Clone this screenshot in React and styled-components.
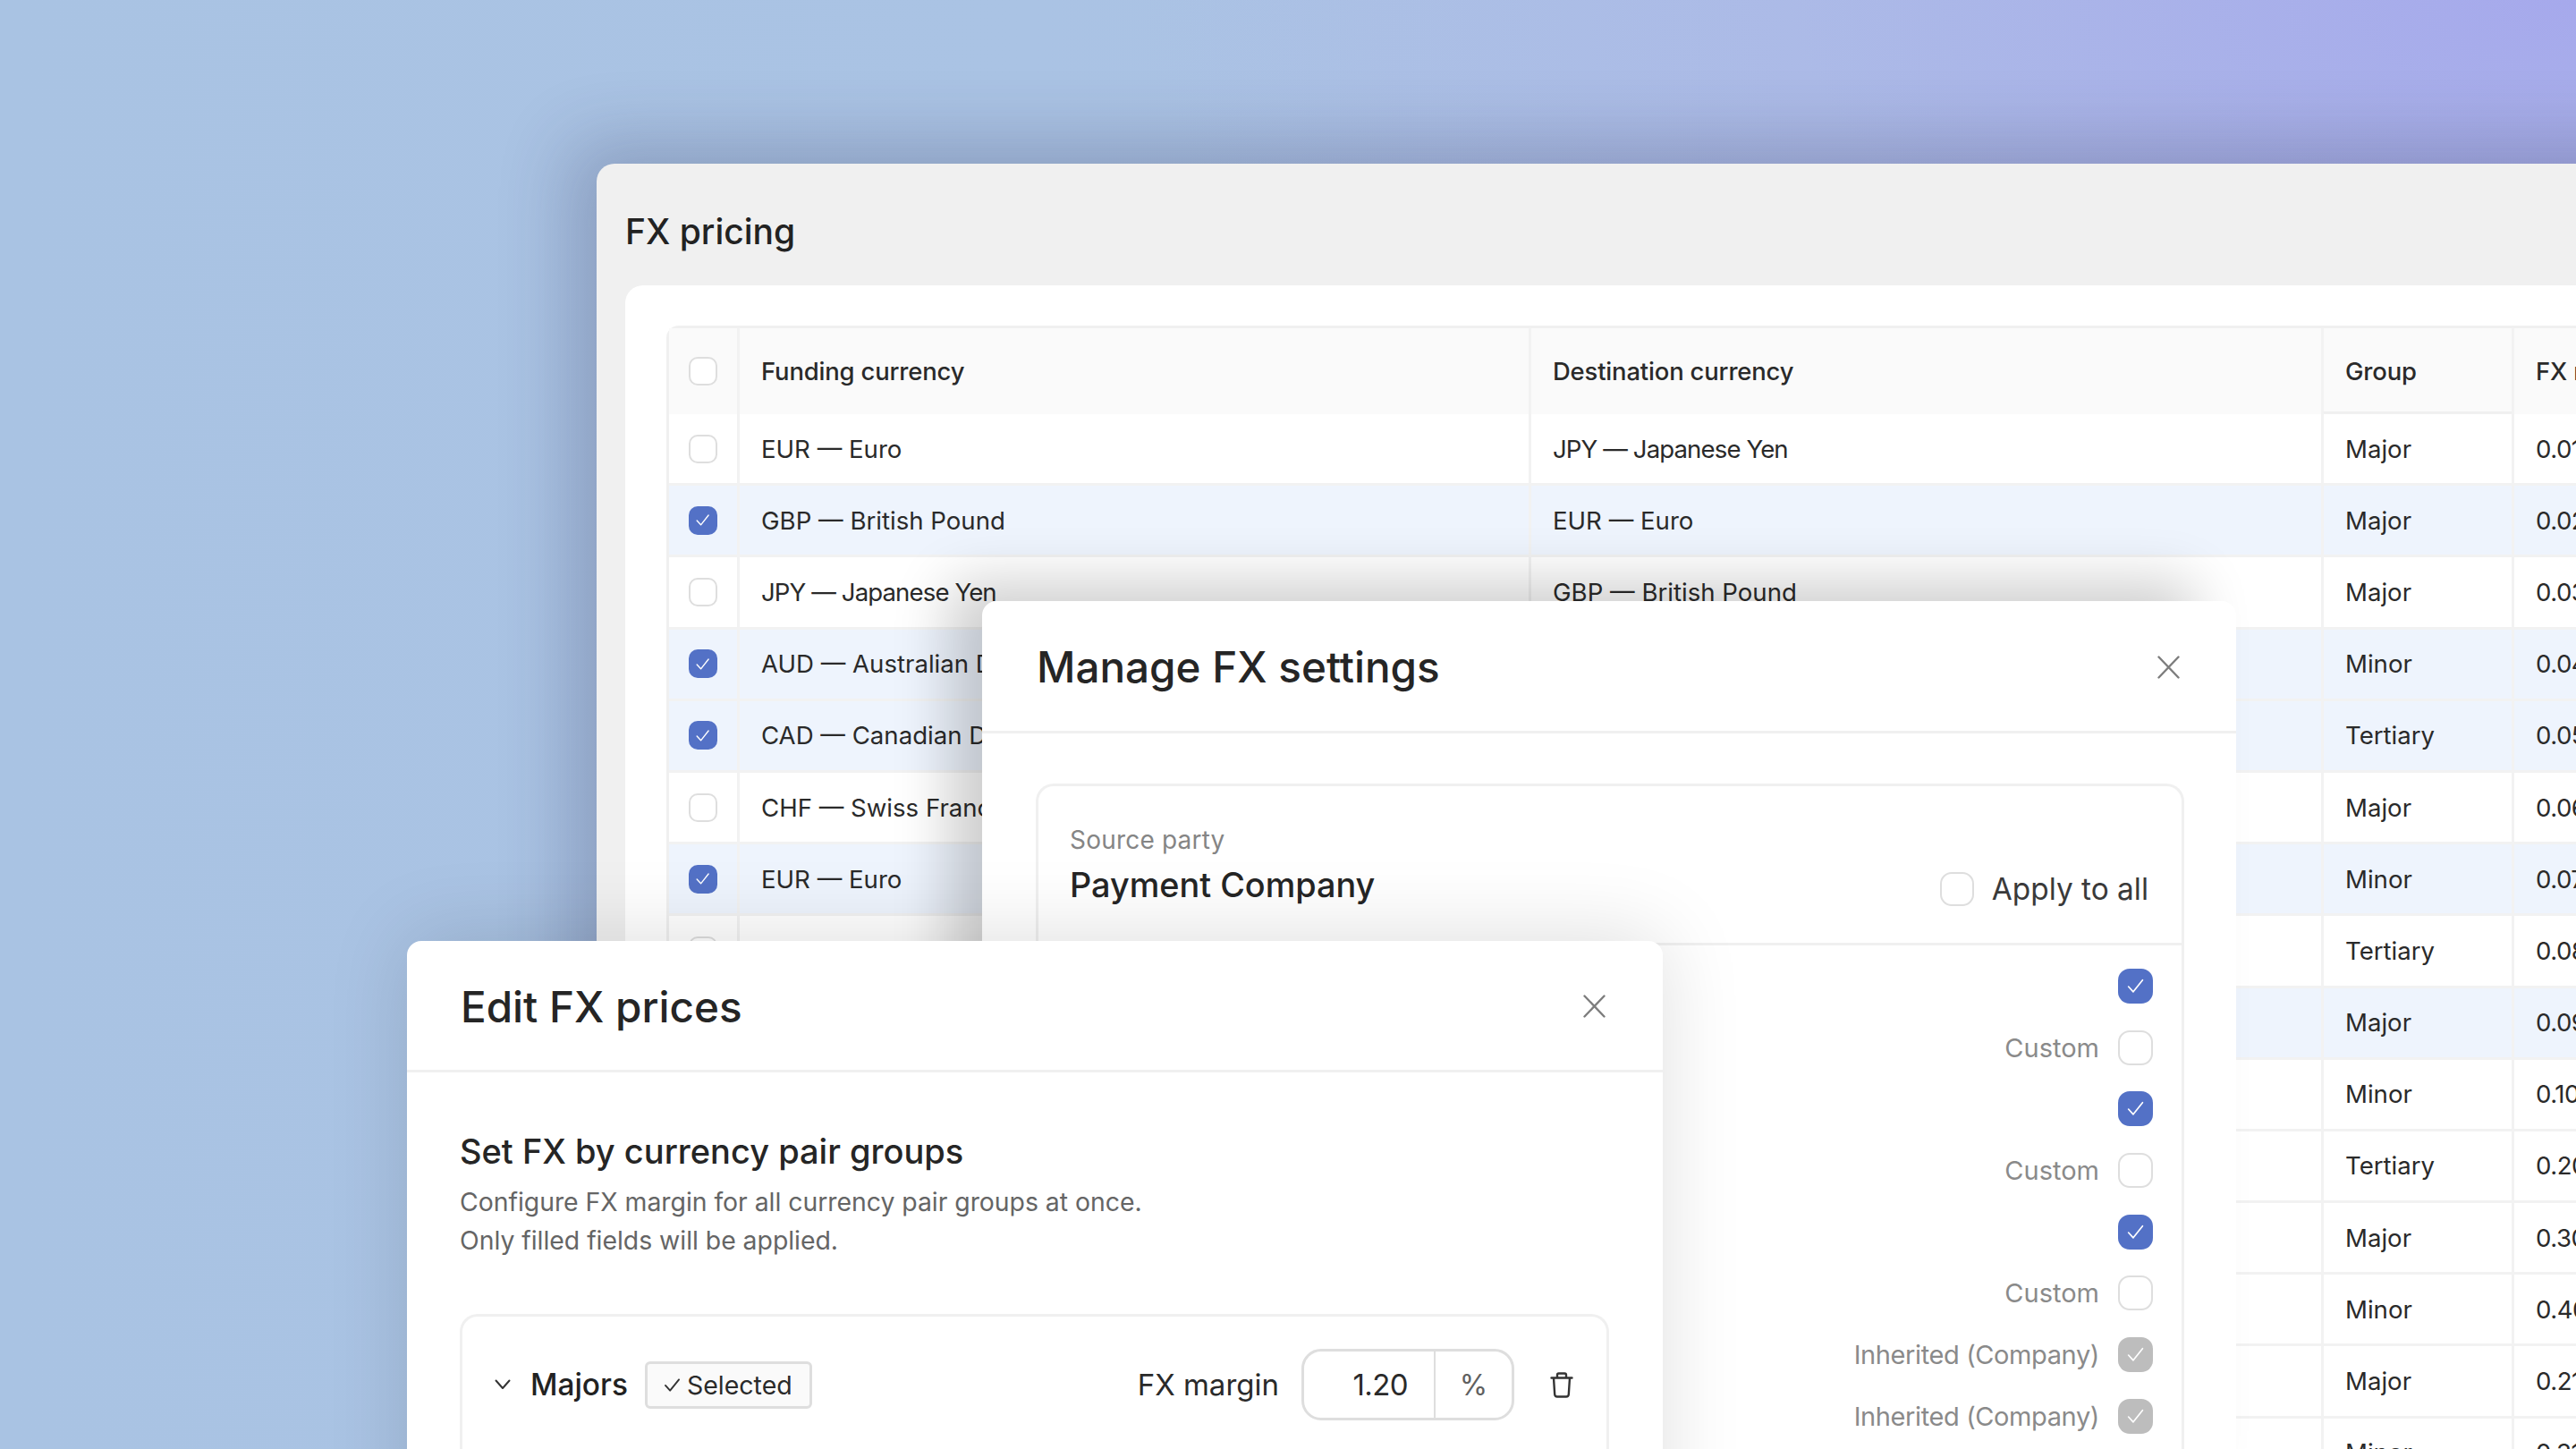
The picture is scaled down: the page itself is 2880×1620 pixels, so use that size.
import React from 'react';
import styled, { createGlobalStyle } from 'styled-components';

const Global = createGlobalStyle`
  html, body { margin: 0; padding: 0; width: 2880px; height: 1620px; overflow: hidden; }
  #root { width: 2880px; height: 1620px; }
  * { box-sizing: border-box; }
`;

const Stage = styled.div`
  position: relative;
  width: 2880px;
  height: 1620px;
  overflow: hidden;
  font-family: Inter, "Liberation Sans", sans-serif;
  color: #222;
  background:
    radial-gradient(1600px 760px at 100% 0%, #a6a9ec 0%, rgba(172, 184, 232, 0.75) 55%, rgba(172, 190, 228, 0) 100%),
    linear-gradient(90deg, #a9c3e3 0%, #aac3e4 40%, #aec0e4 100%);
`;

const BackPanel = styled.section`
  position: absolute;
  left: 667px;
  top: 183px;
  width: 2500px;
  height: 1700px;
  background: #f0f0f0;
  border-radius: 20px 0 0 0;
  box-shadow: -30px -24px 80px rgba(40, 40, 80, 0.24);
  padding: 0 0 0 32px;
`;

const PanelTitle = styled.h1`
  margin: 0;
  height: 136px;
  display: flex;
  align-items: center;
  padding-top: 14px;
  font-size: 39px;
  font-weight: 500;
  color: #222;
`;

const TableCard = styled.div`
  background: #fff;
  border-radius: 20px 0 0 0;
  padding: 45px 0 0 46px;
  height: 1500px;
`;

const Table = styled.div`
  border: solid #f0f0f0;
  border-width: 3px 0 0 3px;
  border-radius: 14px 0 0 0;
  width: 2400px;
`;

const Row = styled.div`
  display: grid;
  grid-template-columns: 79px 885px 886px 213px 1fr;
  height: ${p => (p.$head ? 96 : 80.2)}px;
  background: ${p => (p.$head ? '#fafafa' : p.$on ? '#eef4fd' : '#fff')};
  border-bottom: ${p => (p.$head ? 0 : 3)}px solid #f2f2f2;
  font-size: ${p => (p.$head ? 27.4 : 27.6)}px;
  font-weight: ${p => (p.$head ? 500 : 400)};
  letter-spacing: ${p => (p.$head ? '-0.15px' : '0')};
  color: #2a2a2a;
`;

const Cell = styled.div`
  display: flex;
  align-items: center;
  justify-content: ${p => (p.$center ? 'center' : 'flex-start')};
  padding-left: ${p => (p.$center ? 0 : 24)}px;
  border-right: 3px solid #f2f2f2;
  white-space: nowrap;
  overflow: hidden;
  letter-spacing: ${p => (p.$tight ? `${p.$tight}px` : 'inherit')};
  box-shadow: ${p => (p.$under ? 'inset 0 -3px 0 #f0f0f0' : 'none')};
`;

const Box = styled.span`
  flex: none;
  width: ${p => p.$size || 32}px;
  height: ${p => p.$size || 32}px;
  border-radius: ${p => (p.$size ? 13 : 10)}px;
  display: inline-flex;
  align-items: center;
  justify-content: center;
  background: ${p => (p.$kind === 'on' ? '#5371c6' : p.$kind === 'inherit' ? '#bdbdbd' : '#fff')};
  border: ${p => (p.$kind ? 'none' : '2.5px solid #dedede')};
  svg { display: block; width: 54%; height: 54%; }
`;

const Tick = ({ color = '#fff' }) => (
  <svg viewBox="0 0 20 20" fill="none" stroke={color} strokeWidth="1.6" strokeLinecap="round" strokeLinejoin="round">
    <path d="M2.5 10.5 L7.6 16 L17.5 3.5" />
  </svg>
);

const Check = ({ kind, size }) => (
  <Box $kind={kind} $size={size}>{kind ? <Tick /> : null}</Box>
);

const Modal = styled.section`
  position: absolute;
  left: ${p => p.$x}px;
  top: ${p => p.$y}px;
  width: ${p => p.$w}px;
  height: ${p => p.$h}px;
  background: #fff;
  border-radius: 16px 16px 0 0;
  box-shadow: ${p => p.$shadow};
`;

const ModalHead = styled.header`
  height: ${p => p.$h}px;
  display: flex;
  align-items: center;
  justify-content: space-between;
  padding: 2px ${p => p.$pr}px 0 ${p => p.$pl}px;
  border-bottom: 3px solid #f0f0f0;
`;

const ModalTitle = styled.h2`
  margin: 0;
  font-size: 47.6px;
  font-weight: 500;
  color: #252525;
`;

const CloseIcon = styled.svg`
  width: 25px;
  height: 26px;
  display: block;
`;

const Close = () => (
  <CloseIcon viewBox="0 0 25 26" fill="none" stroke="#7d7d7d" strokeWidth="2.4" strokeLinecap="round">
    <path d="M1.5 1.5 L23.5 24.5 M23.5 1.5 L1.5 24.5" />
  </CloseIcon>
);

const ManageBody = styled.div`
  padding: 56px 58px 0 60px;
`;

const PartyCard = styled.div`
  border: 3px solid #f0f0f0;
  border-bottom: 0;
  border-radius: 20px 20px 0 0;
  height: 760px;
`;

const PartyHead = styled.div`
  height: 178px;
  display: flex;
  justify-content: space-between;
  align-items: flex-start;
  padding: 42px 37px 0 35px;
  border-bottom: 3px solid #f0f0f0;
`;

const PartyLabel = styled.div`
  font-size: 28px;
  line-height: 36px;
  letter-spacing: 0.2px;
  color: #858585;
`;

const PartyName = styled.div`
  margin-top: 6px;
  font-size: 37.8px;
  line-height: 52px;
  font-weight: 500;
  color: #252525;
`;

const ApplyAll = styled.label`
  display: flex;
  align-items: center;
  gap: 20px;
  margin-top: 50px;
  font-size: 33.4px;
  line-height: 46px;
  color: #3a3a3a;
`;

const Perms = styled.div`
  display: flex;
  flex-direction: column;
  align-items: flex-end;
  padding: 11px 32px 0 0;
`;

const Perm = styled.div`
  height: 68.7px;
  display: flex;
  align-items: center;
  gap: 21px;
  font-size: 29px;
  letter-spacing: ${p => (p.$tight ? '-0.4px' : '0')};
  color: #8a8a8a;
`;

const EditBody = styled.div`
  padding: 62px 60px 0 59px;
`;

const SubTitle = styled.h3`
  margin: 0;
  font-size: 38px;
  line-height: 52px;
  font-weight: 500;
  color: #252525;
`;

const Desc = styled.p`
  margin: 9px 0 0;
  font-size: 28.4px;
  line-height: 43px;
  letter-spacing: -0.03px;
  color: #656565;
`;

const GroupCard = styled.div`
  margin-top: 61px;
  border: 3px solid #f0f0f0;
  border-bottom: 0;
  border-radius: 20px 20px 0 0;
  height: 300px;
`;

const GroupRow = styled.div`
  display: flex;
  align-items: center;
  height: 152px;
  padding: 0 37px 0 36px;
`;

const Chevron = styled.svg`
  width: 18px;
  height: 12px;
  margin-right: 22px;
  display: block;
`;

const GroupName = styled.div`
  font-size: 33.4px;
  font-weight: 500;
  color: #222;
  margin-right: 19px;
`;

const Badge = styled.div`
  display: flex;
  align-items: center;
  gap: 7px;
  width: 187px;
  height: 53px;
  padding-left: 18px;
  background: #fafafa;
  border: 3px solid #dedede;
  border-radius: 6px;
  font-size: 28.5px;
  color: #2a2a2a;
  svg { width: 19px; height: 17px; display: block; }
`;

const Field = styled.div`
  margin-left: auto;
  display: flex;
  align-items: center;
  gap: 25px;
  font-size: 33px;
  color: #2a2a2a;
`;

const Input = styled.div`
  display: grid;
  grid-template-columns: 147px 1fr;
  width: 238px;
  height: 80px;
  border: 3px solid #dedede;
  border-radius: 22px;
`;

const Value = styled.div`
  display: flex;
  align-items: center;
  justify-content: flex-end;
  padding-right: 29px;
  border-right: 2px solid #dedede;
  font-size: 33px;
  letter-spacing: -0.6px;
`;

const Unit = styled.div`
  display: flex;
  align-items: center;
  justify-content: center;
  font-size: 32px;
  color: #606060;
`;

const TrashIcon = styled.svg`
  width: 26px;
  height: 29px;
  margin-left: 40px;
  display: block;
  flex: none;
`;

const rows = [
  ['EUR — Euro', 'JPY — Japanese Yen', 'Major', '0.01', false],
  ['GBP — British Pound', 'EUR — Euro', 'Major', '0.02', true],
  ['JPY — Japanese Yen', 'GBP — British Pound', 'Major', '0.03', false],
  ['AUD — Australian Dollar', 'CAD — Canadian Dollar', 'Minor', '0.04', true],
  ['CAD — Canadian Dollar', 'CHF — Swiss Franc', 'Tertiary', '0.05', true],
  ['CHF — Swiss Franc', 'AUD — Australian Dollar', 'Major', '0.06', false],
  ['EUR — Euro', 'GBP — British Pound', 'Minor', '0.07', true],
  ['GBP — British Pound', 'JPY — Japanese Yen', 'Tertiary', '0.08', false],
  ['JPY — Japanese Yen', 'EUR — Euro', 'Major', '0.09', true],
  ['AUD — Australian Dollar', 'EUR — Euro', 'Minor', '0.10', false],
  ['CAD — Canadian Dollar', 'EUR — Euro', 'Tertiary', '0.20', false],
  ['CHF — Swiss Franc', 'EUR — Euro', 'Major', '0.30', false],
  ['EUR — Euro', 'CHF — Swiss Franc', 'Minor', '0.40', false],
  ['GBP — British Pound', 'CHF — Swiss Franc', 'Major', '0.21', false],
  ['JPY — Japanese Yen', 'CHF — Swiss Franc', 'Minor', '0.31', false],
];

const perms = [
  ['', 'on'], ['Custom', null], ['', 'on'], ['Custom', null], ['', 'on'], ['Custom', null],
  ['Inherited (Company)', 'inherit'], ['Inherited (Company)', 'inherit'],
];

const tightFor = text => (text.includes('Japanese') ? -0.9 : undefined);

export default function App() {
  return (
    <Stage>
      <Global />
      <BackPanel>
        <PanelTitle>FX pricing</PanelTitle>
        <TableCard>
          <Table>
            <Row $head>
              <Cell $center><Check /></Cell>
              <Cell>Funding currency</Cell>
              <Cell>Destination currency</Cell>
              <Cell $under>Group</Cell>
              <Cell>FX margin</Cell>
            </Row>
            {rows.map((r, i) => (
              <Row key={i} $on={r[4]}>
                <Cell $center><Check kind={r[4] ? 'on' : null} /></Cell>
                <Cell $tight={tightFor(r[0])}>{r[0]}</Cell>
                <Cell $tight={tightFor(r[1])}>{r[1]}</Cell>
                <Cell>{r[2]}</Cell>
                <Cell $tight={-0.5}>{r[3]}</Cell>
              </Row>
            ))}
          </Table>
        </TableCard>
      </BackPanel>

      <Modal $x={1098} $y={672} $w={1402} $h={1000} $shadow="-42px -26px 64px -6px rgba(0,0,0,0.2)">
        <ModalHead $h={148} $pl={61} $pr={63}>
          <ModalTitle>Manage FX settings</ModalTitle>
          <Close />
        </ModalHead>
        <ManageBody>
          <PartyCard>
            <PartyHead>
              <div>
                <PartyLabel>Source party</PartyLabel>
                <PartyName>Payment Company</PartyName>
              </div>
              <ApplyAll><Check size={38} />Apply to all</ApplyAll>
            </PartyHead>
            <Perms>
              {perms.map((p, i) => (
                <Perm key={i} $tight={p[1] === 'inherit'}>{p[0]}<Check kind={p[1]} size={39} /></Perm>
              ))}
            </Perms>
          </PartyCard>
        </ManageBody>
      </Modal>

      <Modal $x={455} $y={1052} $w={1404} $h={700} $shadow="0 -6px 90px rgba(0,0,0,0.13)">
        <ModalHead $h={147} $pl={60} $pr={64}>
          <ModalTitle>Edit FX prices</ModalTitle>
          <Close />
        </ModalHead>
        <EditBody>
          <SubTitle>Set FX by currency pair groups</SubTitle>
          <Desc>Configure FX margin for all currency pair groups at once.<br />Only filled fields will be applied.</Desc>
          <GroupCard>
            <GroupRow>
              <Chevron viewBox="0 0 18 12" fill="none" stroke="#333" strokeWidth="2" strokeLinecap="round" strokeLinejoin="round">
                <path d="M1.5 1.5 L9 10 L16.5 1.5" />
              </Chevron>
              <GroupName>Majors</GroupName>
              <Badge>
                <svg viewBox="0 0 20 18" fill="none" stroke="#333" strokeWidth="2" strokeLinecap="round" strokeLinejoin="round">
                  <path d="M2 9.5 L7.5 15.5 L18 2.5" />
                </svg>
                Selected
              </Badge>
              <Field>
                FX margin
                <Input>
                  <Value>1.20</Value>
                  <Unit>%</Unit>
                </Input>
              </Field>
              <TrashIcon viewBox="0 0 26 29" fill="none" stroke="#333" strokeWidth="2.4" strokeLinecap="round" strokeLinejoin="round">
                <path d="M1.5 6.5 H24.5 M8 6.5 V3.2 Q8 1.5 9.7 1.5 H16.3 Q18 1.5 18 3.2 V6.5 M4 6.5 L5.2 25 Q5.4 27.5 8 27.5 H18 Q20.6 27.5 20.8 25 L22 6.5" />
              </TrashIcon>
            </GroupRow>
          </GroupCard>
        </EditBody>
      </Modal>
    </Stage>
  );
}
